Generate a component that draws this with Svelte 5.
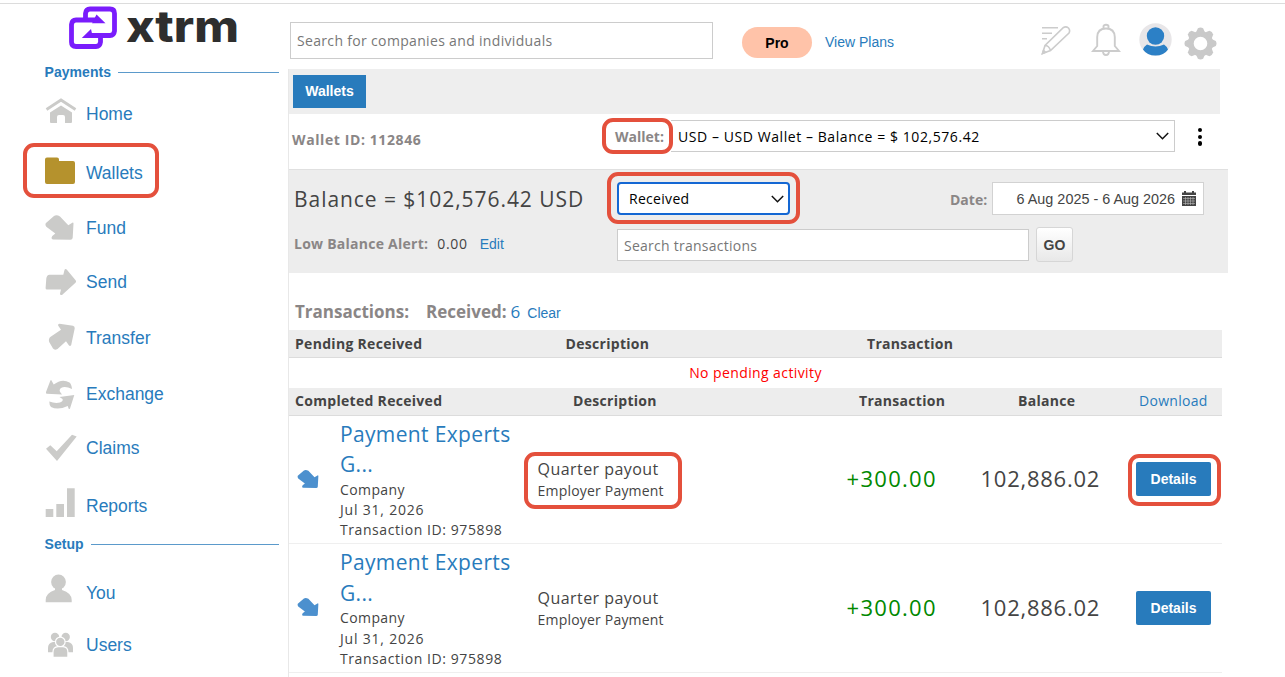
<script lang="ts">
	interface NavItem {
		label: string;
		icon: string;
		height: number;
	}

	const payments: NavItem[] = [
		{ label: 'Home', icon: 'home', height: 58 },
		{ label: 'Wallets', icon: 'folder', height: 59 },
		{ label: 'Fund', icon: 'fund', height: 51 },
		{ label: 'Send', icon: 'send', height: 58 },
		{ label: 'Transfer', icon: 'transfer', height: 54 },
		{ label: 'Exchange', icon: 'exchange', height: 57 },
		{ label: 'Claims', icon: 'check', height: 52 },
		{ label: 'Reports', icon: 'bars', height: 64 }
	];

	const setup: NavItem[] = [
		{ label: 'You', icon: 'user', height: 42 },
		{ label: 'Users', icon: 'users', height: 62 }
	];

	const arrows: Record<string, string> = {
		fund: 'M1.7 15.2 10 8Q12.5 6.3 16 8.5L24.3 17.2 28.3 14.7Q29.5 14.2 29.5 15.6L28.7 29.8Q28.5 31.8 26.5 31.8L9 31.4Q6.5 30.8 8.3 28L11.3 25.5 2.3 18.7Q.8 17 1.7 15.2Z',
		send: 'M5.5 12.8H19.3L20.5 8Q21 6.5 22.7 7.5L31.8 18.5Q32.5 19.7 31.5 20.7L18 33Q15.8 33.5 16 31.5L17 27.5H3Q1.5 27.5 1.6 26L2.3 16.5Q2.8 13 5.5 12.8Z',
		transfer: 'M15.5 5.7 29 7.8Q31 8.3 30.7 10.5L27.2 27Q26.3 28.8 25 27.6L22 23.3 13.5 31Q10.5 32.5 9 30.5L5.2 24Q4 20.5 7 18.5L17 11.7 14.1 7.5Q13.7 5.8 15.5 5.7Z'
	};

	const rows = [
		{ name: 'Payment Experts G...', type: 'Company', date: 'Jul 31, 2026', id: '975898', amount: '+300.00', balance: '102,886.02', marked: true },
		{ name: 'Payment Experts G...', type: 'Company', date: 'Jul 31, 2026', id: '975898', amount: '+300.00', balance: '102,886.02', marked: false }
	];

	let filter = $state('Received');
</script>

{#snippet navIcon(icon: string)}
	<svg class="nav-icon" viewBox="0 0 34 40" aria-hidden="true">
		{#if icon === 'home'}
			<path d="M2.5 15.5 17 6 31.5 15.5" fill="none" stroke="currentColor" stroke-width="2.8" />
			<path d="M6 18.5 17 11.5 28 18.5V28Q28 29 27 29H21V23Q21 21 19 21H15Q13 21 13 23V29H7Q6 29 6 28Z" />
		{:else if icon === 'folder'}
			<path class="gold" d="M3 4.500H13Q15 4.500 15 6.500V8H29Q31 8 31 10V29Q31 31 29 31H3Q1 31 1 29V6.500Q1 4.500 3 4.500Z" />
		{:else if icon === 'exchange'}
			<path d="M7.5 6.5 9.7 10.5Q18 4 25.5 8.5 27.5 10 28 15 21 11.5 17 14 14.5 16 16.5 18.5L18 20.5 2.8 19.8Q1.6 19.4 2 18L6.3 6.8Q7 5.6 7.5 6.5Z" />
			<path d="M30.3 21 26 34.5Q25.2 35.5 24.6 34.5L23.7 32Q14 36.5 7 33 5.3 31.5 5.3 27.5 11 29.6 16 28.5 19.5 27 18.5 25L15.5 23Z" />
		{:else if icon === 'check'}
			<path d="M2 20.7 6.3 17.3 12.7 23.3 28 6.7 32.7 8.5 13 33Z" />
		{:else if icon === 'bars'}
			<path d="M1.7 23H9.3V31H1.7ZM12.3 18H20V31H12.3ZM23 2.3H30.7V31H23Z" />
		{:else if icon === 'user'}
			<circle cx="14.5" cy="8.9" r="7.4" />
			<path d="M11 13H18V17Q27.7 20 27.7 27V29.2H1.7V27Q1.7 20 11 17Z" />
		{:else if icon === 'users'}
			<circle cx="11" cy="12" r="4.2" />
			<circle cx="21.7" cy="12" r="4.2" />
			<path d="M4 27.3V23Q4 18 9 17H24Q29 18 29 23V27.3Z" />
			<circle class="front" cx="16.3" cy="16.9" r="4.8" />
			<path class="front" d="M9 32.3V27Q9 22 14 21.7H19Q23.9 22 23.9 27V32.3Z" />
		{:else}
			<path d={arrows[icon]} />
		{/if}
	</svg>
{/snippet}

{#snippet navList(items: NavItem[])}
	<ul>
		{#each items as item}
			<li style:height="{item.height}px">
				{@render navIcon(item.icon)}
				<a href="#{item.icon}">{item.label}</a>
				{#if item.icon === 'folder'}<span class="mark mark-nav"></span>{/if}
			</li>
		{/each}
	</ul>
{/snippet}

<div class="page">
	<aside>
		<svg class="logo" viewBox="66 4 176 48" role="img" aria-label="xtrm">
			<g fill="none" stroke="#7a1cfc" stroke-width="4.8">
				<path d="M85.5 18V13.5Q86 9 90 9H110Q114.5 9 114.5 13.5V31Q114 35.5 110 35.5H88" />
				<path d="M100.5 36V42Q100 46.5 96 46.5H76Q71.5 46.5 71.5 42V24.5Q72 20 76 20H99" />
			</g>
			<path d="M96.5 14.5 105.5 23.3H92ZM91 29 81.8 38H93Z" fill="#7a1cfc" />
			<text x="126" y="41.5" textLength="113" lengthAdjust="spacingAndGlyphs">xtrm</text>
		</svg>
		<h2>Payments</h2>
		{@render navList(payments)}
		<h2 class="setup">Setup</h2>
		{@render navList(setup)}
	</aside>

	<main>
		<header>
			<input class="search" placeholder="Search for companies and individuals" />
			<span class="plan">Pro</span>
			<a class="view-plans" href="#plans">View Plans</a>
			<div class="tools">
				<svg width="30" height="32" viewBox="0 0 30 32" fill="none" stroke="#ccc" stroke-width="1.6">
					<path d="M1 3.8H17M1 9.3H11M1 14.8H6" />
					<path d="M1.5 29.5 4 21.5 22.5 3.5Q25 2 27.5 4 29.5 6.5 28 9L9.5 26.5ZM4 21.5Q8 21.5 9.5 26.5" />
					<path d="M1.5 29.5 2.5 26.5 4.5 28.3Z" fill="#ccc" />
				</svg>
				<svg width="30" height="34" viewBox="0 0 30 34" fill="none" stroke="#ccc" stroke-width="1.9">
					<path d="M12.5 5.5V3.5Q12.5 1.8 15 1.8T17.5 3.5V5.5M2 28H28L23.8 23V14Q23.5 5.5 15 5.5T6.2 14V23ZM12 28Q12 32 15 32T18 28" />
				</svg>
				<svg width="33" height="33" viewBox="0 0 33 33">
					<circle cx="16.5" cy="16.5" r="16.2" fill="#e8e6e8" />
					<circle cx="16.5" cy="13" r="8.7" fill="#2c80c6" />
					<path d="M8 21.5Q16.5 25.5 25 21.5 28 23.5 29 26.5 25 32.5 16.5 32.5T4 26.5Q5 23.5 8 21.5Z" fill="#2c80c6" />
				</svg>
				<svg class="gear" width="33" height="33" viewBox="-16.5 -16.5 33 33">
					<circle r="9.7" fill="none" stroke="#c9c9c9" stroke-width="5.8" />
					{#each [0, 45, 90, 135, 180, 225, 270, 315] as angle}
						<path d="M-4.3-11.5-2.6-15.3Q0-16.7 2.6-15.3L4.3-11.5Z" fill="#c9c9c9" transform="rotate({angle})" />
					{/each}
				</svg>
			</div>
		</header>

		<section class="panel">
			<div class="tabs"><button class="tab">Wallets</button></div>

			<div class="wallet-row">
				<b class="wallet-id">Wallet ID: 112846</b>
				<b class="wallet-label">Wallet:<span class="mark mark-label"></span></b>
				<div class="wallet-select">
					<span>USD – USD Wallet – Balance = $ 102,576.42</span>
					<svg width="13" height="8" viewBox="0 0 13 8"><path d="M.8 1 6.5 6.7 12.2 1" /></svg>
				</div>
				<div class="kebab"><i></i><i></i><i></i></div>
			</div>

			<div class="balance">
				<div class="summary">
					<div class="total">Balance = $102,576.42 USD</div>
					<div class="alert"><b>Low Balance Alert:</b> <span>0.00</span> <a href="#edit">Edit</a></div>
				</div>
				<div class="filters">
					<div class="line">
						<div class="filter">
							<span>{filter}</span>
							<svg width="13" height="8" viewBox="0 0 13 8"><path d="M.8 1 6.5 6.7 12.2 1" /></svg>
							<span class="mark mark-filter"></span>
						</div>
						<b class="date-label">Date:</b>
						<div class="date">
							<span>6 Aug 2025 - 6 Aug 2026</span>
							<svg width="14" height="15" viewBox="0 0 14 15">
								<path d="M0 1.5H2V0H4V1.5H10V0H12V1.5H14V4H0ZM0 5H14V15H0Z" fill="#444" />
								<path d="M1 7.5H13M1 10H13M1 12.5H13M3.5 6V14M6 6V14M8.5 6V14M11 6V14" stroke="#bbb" stroke-width=".6" />
							</svg>
						</div>
					</div>
					<div class="line second">
						<input class="search-tx" placeholder="Search transactions" />
						<button class="go">GO</button>
					</div>
				</div>
			</div>

			<div class="heading">
				<b>Transactions:</b><b class="received">Received:</b>
				<a class="count" href="#received">6</a><a class="clear" href="#clear">Clear</a>
			</div>

			<div class="table">
				<div class="head pending">
					<span>Pending Received</span><span>Description</span><span>Transaction</span>
				</div>
				<div class="empty">No pending activity</div>
				<div class="head grid">
					<span class="c-name">Completed Received</span>
					<span class="c-desc">Description</span>
					<span class="c-tx">Transaction</span>
					<span class="c-bal">Balance</span>
					<a class="c-act" href="#download">Download</a>
				</div>
				{#each rows as row}
					<div class="row grid">
						<div class="who">
							<svg class="in" viewBox="1 6 29 27"><path d={arrows.fund} /></svg>
							<div>
								<a class="name" href="#details">{row.name}</a>
								<div>{row.type}</div>
								<div class="when">{row.date}</div>
								<div class="txid">Transaction ID: {row.id}</div>
							</div>
						</div>
						<div class="desc">
							<div class="title">Quarter payout</div>
							<div class="sub">Employer Payment</div>
							{#if row.marked}<span class="mark mark-desc"></span>{/if}
						</div>
						<div class="amount">{row.amount}</div>
						<div class="bal">{row.balance}</div>
						<div class="action">
							<button class="details">Details</button>
							{#if row.marked}<span class="mark mark-details"></span>{/if}
						</div>
					</div>
				{/each}
			</div>
		</section>
	</main>
</div>

<style>
	:global(body) {
		background: #fff;
		overflow: hidden;
	}
	.page {
		box-sizing: border-box;
		display: flex;
		width: 1285px;
		height: 674px;
		margin-top: 3px;
		border-top: 1px solid #dcdcdc;
		font-family: 'Open Sans', 'Noto Sans', sans-serif;
		font-size: 14px;
		color: #444;
	}
	* {
		box-sizing: border-box;
	}
	a {
		color: #287bbc;
		text-decoration: none;
	}
	b {
		color: #8a8686;
	}
	aside {
		flex: 0 0 288px;
		font-family: 'Liberation Sans', Arial, sans-serif;
	}
	.logo {
		display: block;
		width: 176px;
		height: 48px;
		margin-left: 66px;
		overflow: visible;
	}
	.logo text {
		font-family: Inter, sans-serif;
		font-size: 43px;
		font-weight: 800;
		fill: #2e2e2e;
	}
	h2 {
		display: flex;
		align-items: center;
		gap: 7px;
		height: 14px;
		margin: 13px 9px 0 44.5px;
		font-size: 14px;
		letter-spacing: 0.05px;
		color: #287bbc;
	}
	h2::after {
		content: '';
		flex: 1;
		height: 1px;
		background: #5b9acb;
	}
	h2.setup {
		margin-top: -1px;
		margin-bottom: 21px;
	}
	ul {
		margin: 0;
		padding: 0;
		list-style: none;
	}
	h2:not(.setup) + ul {
		padding-top: 6px;
	}
	li {
		position: relative;
		display: flex;
		align-items: center;
		gap: 8px;
		padding-left: 44px;
		font-size: 17.5px;
	}
	li a {
		padding-top: 1px;
	}
	.nav-icon {
		width: 34px;
		height: 40px;
		color: #cbcbc9;
		fill: #cbcbc9;
	}
	.gold {
		fill: #b5922d;
	}
	.front {
		stroke: #fff;
		stroke-width: 1.2;
	}
	.mark {
		position: absolute;
		border: 4px solid #e4503c;
		border-radius: 11px;
		pointer-events: none;
	}
	.mark-nav {
		left: 23px;
		top: 0;
		width: 136px;
		height: 55px;
	}
	main {
		width: 940px;
	}
	header {
		display: flex;
		align-items: center;
		height: 65px;
		padding: 0 0 0 2px;
	}
	input {
		border: 1px solid #ccc;
		outline: 0;
		font: inherit;
		color: #444;
		background: #fff;
	}
	input::placeholder {
		color: #777;
		opacity: 1;
	}
	.search {
		width: 423px;
		height: 37px;
		margin-top: 8px;
		padding: 0 6px;
		letter-spacing: 0.33px;
	}
	.plan {
		width: 70px;
		height: 31px;
		margin: 11px 13px 0 29px;
		border-radius: 16px;
		background: #ffc3a9;
		color: #000;
		font: bold 14px/33px 'Liberation Sans', Arial, sans-serif;
		text-align: center;
	}
	.view-plans {
		margin-top: 11px;
		font: 14px 'Liberation Sans', Arial, sans-serif;
	}
	.tools {
		display: flex;
		align-items: center;
		margin-top: 6px;
		margin-left: 147px;
	}
	.tools svg:nth-child(2) {
		margin-left: 20px;
	}
	.tools svg:nth-child(3) {
		margin-left: 18px;
	}
	.tools .gear {
		margin: 7px 0 0 12px;
	}
	.panel {
		height: 608px;
		border-left: 1px solid #e8e8e8;
	}
	.tabs {
		width: 931px;
		height: 45px;
		padding: 6px 4px;
		background: #eee;
	}
	.tab {
		width: 73px;
		height: 33px;
		padding: 0 0 1px;
		border: 0;
		background: #287bbc;
		color: #fff;
		font: bold 14px 'Liberation Sans', Arial, sans-serif;
	}
	.wallet-row {
		display: flex;
		height: 56px;
		padding: 6px 0 0 3px;
		border-bottom: 1px solid #e0e0e0;
	}
	.wallet-id {
		width: 323px;
		line-height: 40px;
		letter-spacing: 0.6px;
	}
	.wallet-label {
		position: relative;
		width: 56px;
		line-height: 33px;
	}
	.mark-label {
		left: -13px;
		top: -2px;
		width: 71px;
		height: 36px;
	}
	.wallet-select {
		display: flex;
		align-items: center;
		justify-content: space-between;
		width: 504px;
		height: 32px;
		padding: 0 5px 0 7px;
		border: 1px solid #ccc;
		border-left: 0;
		color: #000;
		letter-spacing: 0.57px;
	}
	.wallet-select path,
	.filter path {
		fill: none;
		stroke: #111;
		stroke-width: 1.5;
	}
	.kebab {
		display: flex;
		flex-direction: column;
		gap: 2.2px;
		margin: 8px 0 0 23px;
	}
	.kebab i {
		width: 4.4px;
		height: 4.4px;
		border-radius: 50%;
		background: #000;
	}
	.balance {
		display: flex;
		width: 939px;
		height: 103px;
		background: #ededed;
	}
	.summary {
		width: 328px;
		padding: 12px 0 0 5px;
	}
	.total {
		height: 34px;
		font-size: 21px;
		line-height: 34px;
		letter-spacing: 0.95px;
		white-space: nowrap;
	}
	.alert {
		display: flex;
		margin-top: 18px;
		line-height: 20px;
		letter-spacing: 0.25px;
		white-space: nowrap;
	}
	.alert span {
		margin: 0 12px 0 9px;
		letter-spacing: 0.7px;
	}
	.alert a {
		font-family: 'Liberation Sans', Arial, sans-serif;
		letter-spacing: 0;
	}
	.line {
		display: flex;
		padding-top: 12px;
	}
	.second {
		margin-top: -3px;
	}
	.filter {
		position: relative;
		display: flex;
		align-items: center;
		justify-content: space-between;
		width: 173px;
		height: 33px;
		padding: 0 4px 0 10px;
		border: 2px solid #1467d3;
		border-radius: 4px;
		background: #fff;
		color: #000;
		letter-spacing: 0.3px;
	}
	.mark-filter {
		left: -12px;
		top: -12px;
		width: 193px;
		height: 52px;
	}
	.date-label {
		width: 42px;
		margin-left: 160px;
		line-height: 36px;
	}
	.date {
		display: flex;
		align-items: center;
		justify-content: flex-end;
		gap: 7px;
		width: 212px;
		height: 33px;
		padding: 0 7px 0 0;
		border: 1px solid #d2d2d2;
		background: #fff;
		font: 14.4px 'Liberation Sans', Arial, sans-serif;
	}
	.search-tx {
		width: 412px;
		height: 32px;
		margin-top: 2px;
		padding: 0 6px;
		letter-spacing: 0.25px;
	}
	.go {
		width: 37px;
		height: 35px;
		margin-left: 7px;
		padding: 0;
		border: 1px solid #d6d6d6;
		border-radius: 3px;
		background: linear-gradient(#fff, #e8e8e8);
		color: #444;
		font: bold 14px 'Liberation Sans', Arial, sans-serif;
	}
	.heading {
		display: flex;
		align-items: baseline;
		height: 57px;
		padding: 27px 0 0 6px;
		font-size: 17px;
	}
	.received {
		margin-left: 17px;
	}
	.count {
		margin: 0 7px 0 4px;
	}
	.clear {
		font: 14px 'Liberation Sans', Arial, sans-serif;
	}
	.table {
		width: 933px;
	}
	.head {
		height: 27.5px;
		padding-left: 6px;
		border-bottom: 1px solid #dcdcdc;
		background: #ededed;
		font-weight: 700;
		line-height: 26px;
		letter-spacing: 0.3px;
	}
	.pending {
		display: grid;
		height: 28px;
		line-height: 28px;
		grid-template-columns: 270.5px 301.5px 1fr;
	}
	.empty {
		height: 30px;
		color: #f00;
		line-height: 30px;
		letter-spacing: 0.4px;
		text-align: center;
	}
	.grid {
		display: grid;
		grid-template-columns: 248.5px 309px 134px 155.5px 75px;
	}
	.head.grid {
		padding: 0;
	}
	.c-name {
		padding-left: 6px;
	}
	.c-desc {
		padding-left: 35.5px;
	}
	.c-tx {
		padding-left: 12.5px;
	}
	.c-bal {
		padding-left: 37.5px;
	}
	.c-act {
		padding-left: 3px;
		font-weight: 400;
	}
	.row {
		height: 128.5px;
		align-items: center;
		border-bottom: 1px solid #efefef;
	}
	.who {
		display: flex;
		align-items: center;
		padding-top: 1px;
		line-height: 20.3px;
		letter-spacing: 0.4px;
	}
	.in {
		flex: none;
		width: 22px;
		height: 20px;
		margin: 0 21px 2px 8px;
		fill: #4c90ce;
	}
	.name {
		display: block;
		width: 180px;
		font-size: 21px;
		line-height: 30.5px;
		letter-spacing: 0.35px;
	}
	.when {
		letter-spacing: 0.8px;
	}
	.txid {
		letter-spacing: 0.58px;
	}
	.desc {
		position: relative;
		padding-top: 2px;
	}
	.title {
		font-size: 16px;
		line-height: 22px;
		letter-spacing: 0.45px;
	}
	.sub {
		line-height: 22px;
		letter-spacing: 0.2px;
	}
	.mark-desc {
		left: -14px;
		top: -4px;
		width: 158px;
		height: 57px;
	}
	.amount,
	.bal {
		padding-bottom: 2px;
		font-size: 22px;
		letter-spacing: 0.75px;
	}
	.amount {
		color: #080;
		letter-spacing: 1.3px;
	}
	.action {
		position: relative;
	}
	.details {
		display: block;
		width: 75px;
		height: 34px;
		padding: 0;
		border: 0;
		border-radius: 2px;
		background: #287bbc;
		color: #fff;
		font: bold 14px 'Liberation Sans', Arial, sans-serif;
	}
	.mark-details {
		left: -8px;
		top: -8px;
		width: 93px;
		height: 52px;
	}
</style>
